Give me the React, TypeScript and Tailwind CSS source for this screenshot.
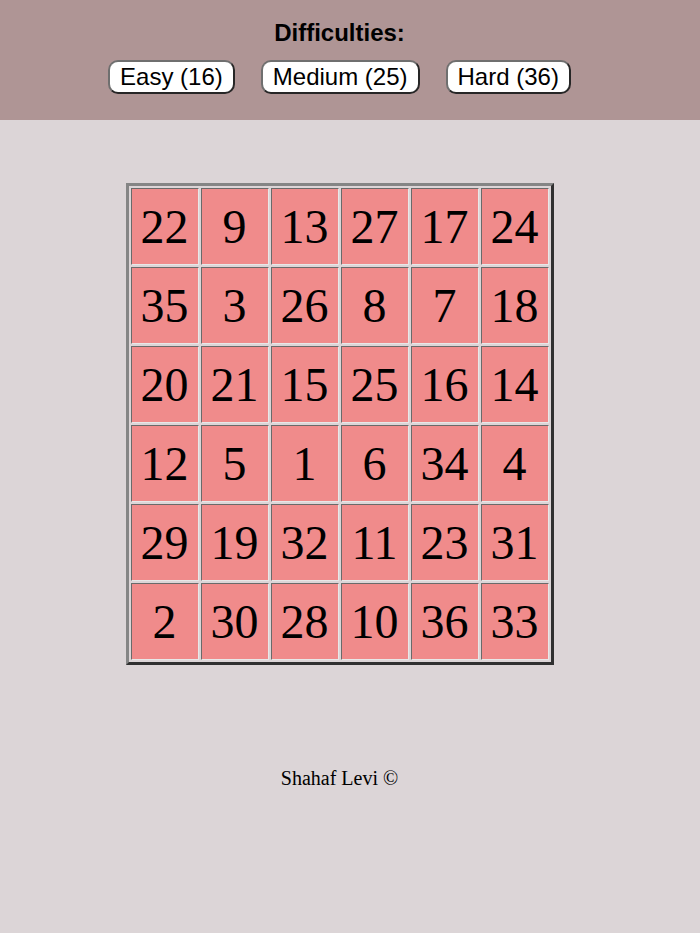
import React from 'react';

const board: number[][] = [
  [22, 9, 13, 27, 17, 24],
  [35, 3, 26, 8, 7, 18],
  [20, 21, 15, 25, 16, 14],
  [12, 5, 1, 6, 34, 4],
  [29, 19, 32, 11, 23, 31],
  [2, 30, 28, 10, 36, 33],
];

const levels = ['Easy (16)', 'Medium (25)', 'Hard (36)'];

const App: React.FC = () => {
  return (
    <div className="min-h-[933px] bg-[#dcd5d7]">
      {/* Header */}
      <div className="h-[120px] bg-[#af9595]">
        <div className="w-[679px] flex flex-col items-center pt-[19px]">
          <div className="font-['Liberation_Sans',Arial,sans-serif] font-bold text-[24px] leading-[28px] text-black">
            Difficulties:
          </div>
          <div className="flex gap-[26px] mt-[13px]">
            {levels.map(level => (
              <button
                key={level}
                className="h-[34px] px-[10px] bg-white rounded-[10px] border-2 border-t-[#6f6f6f] border-l-[#6f6f6f] border-b-[#262626] border-r-[#262626] font-['Liberation_Sans',Arial,sans-serif] text-[24px] leading-[28px] text-black"
              >
                {level}
              </button>
            ))}
          </div>
        </div>
      </div>

      {/* Board */}
      <div className="w-[679px] flex justify-center pt-[63px]">
        <div className="grid grid-cols-6 gap-[2px] p-[2px] border-[3px] border-t-[#858585] border-l-[#858585] border-b-[#303030] border-r-[#303030]">
          {board.flat().map((n, i) => (
            <div
              key={i}
              className="w-[68px] h-[77px] flex items-center justify-center bg-[#f08b8b] border border-t-[#6a6a6a] border-l-[#6a6a6a] border-b-[#e8e8e8] border-r-[#e8e8e8] font-['Liberation_Serif','Times_New_Roman',serif] text-[48px] leading-none text-black"
            >
              {n}
            </div>
          ))}
        </div>
      </div>

      {/* Footer */}
      <div className="w-[679px] flex justify-center pt-[101px]">
        <span className="font-['Liberation_Serif','Times_New_Roman',serif] text-[20px] leading-[24px] text-black">
          Shahaf Levi ©
        </span>
      </div>
    </div>
  );
};

export default App;
